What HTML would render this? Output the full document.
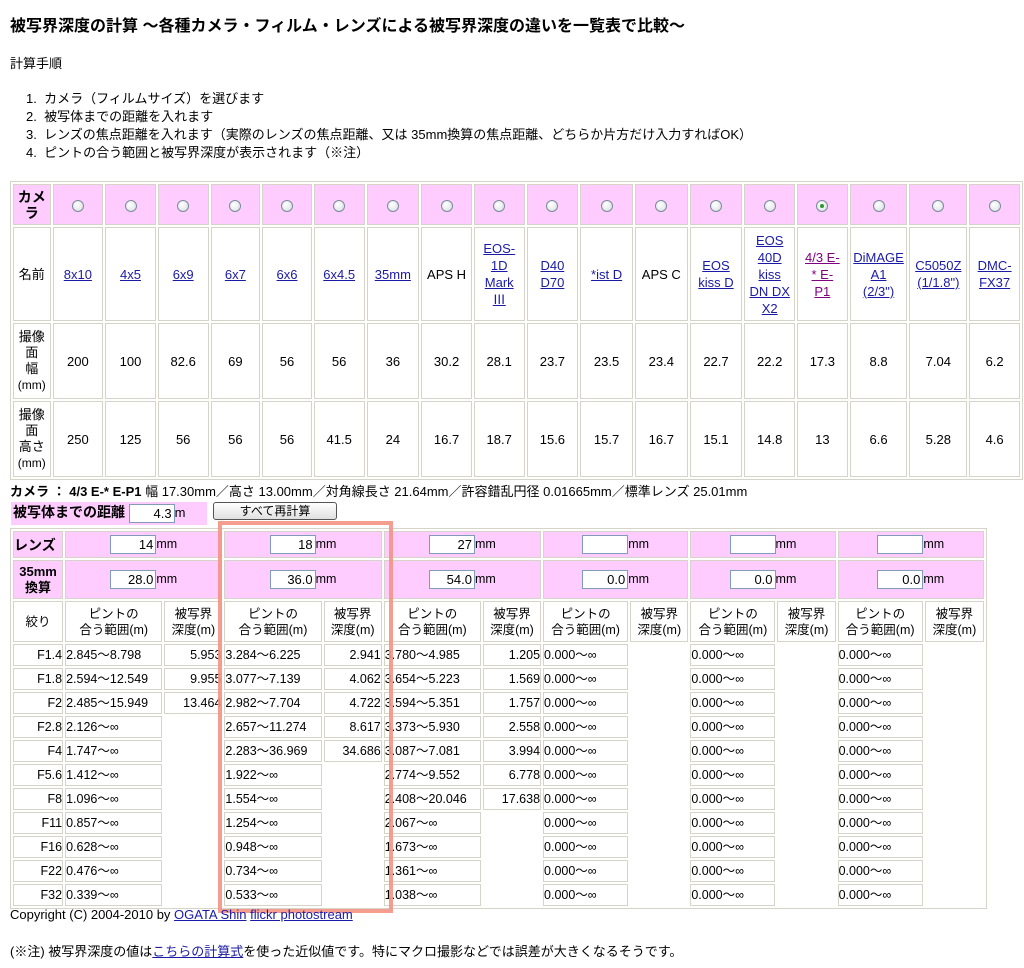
<!DOCTYPE html>
<html><head><meta charset="utf-8">
<style>
body{margin:0;background:#fff;color:#000;font-family:"Liberation Sans","Noto Sans CJK JP",sans-serif;font-size:13px;position:relative;width:1024px;height:968px;overflow:hidden}
.a{position:absolute;white-space:nowrap}
a{color:#1a1aa6;text-decoration:underline}
a.v{color:#800080}
table{border-collapse:separate;border-spacing:2px;table-layout:fixed;position:absolute}
td{padding:0;border:1px solid #d6d3c8;text-align:center;vertical-align:middle;line-height:17px;box-sizing:border-box;overflow:hidden}
.p{background:#ffccff}
.r{display:inline-block;width:12px;height:12px;border-radius:50%;border:1px solid #7a8a99;background:radial-gradient(circle at 40% 35%,#fff,#d8dce0);box-sizing:border-box;vertical-align:middle;position:relative}
.r.on:after{content:"";position:absolute;left:3px;top:3px;width:4px;height:4px;border-radius:50%;background:#2a9a2a}
.in{display:inline-block;width:46px;height:19px;border:1px solid #7f9db9;background:#fff;box-sizing:border-box;text-align:right;padding-right:2px;line-height:17px;vertical-align:middle;font-size:13px}
#t2 td{line-height:16px;white-space:nowrap;font-size:12.5px}
#t2 td.n{text-align:right}
#t2 td.e{border:none}
#t2 td.l{text-align:left}
#t2 td.rt{text-align:right}
</style></head><body>
<div class="a" style="left:10px;top:12px;font-size:16px;font-weight:bold;">被写界深度の計算 ～各種カメラ・フィルム・レンズによる被写界深度の違いを一覧表で比較～</div>
<div class="a" style="left:10px;top:53px;">計算手順</div>
<div class="a" style="left:26px;top:90px;line-height:18px;">1.&nbsp; カメラ（フィルムサイズ）を選びます<br>2.&nbsp; 被写体までの距離を入れます<br>3.&nbsp; レンズの焦点距離を入れます（実際のレンズの焦点距離、又は 35mm換算の焦点距離、どちらか片方だけ入力すればOK）<br>4.&nbsp; ピントの合う範囲と被写界深度が表示されます（※注）</div>

<table style="left:10px;top:181px;width:1013px;border:1px solid #d6d3c8;">
<colgroup><col style="width:37px"><col style="width:50px"><col style="width:50px"><col style="width:50px"><col style="width:49px"><col style="width:49px"><col style="width:50px"><col style="width:52px"><col style="width:50px"><col style="width:50px"><col style="width:51px"><col style="width:52px"><col style="width:52px"><col style="width:52px"><col style="width:50px"><col style="width:50px"><col style="width:57px"><col style="width:57px"><col style="width:50px"></colgroup>
<tr style="height:41px" class="p">
<td class="p" style="font-weight:bold;font-size:14px;line-height:16px">カメ<br>ラ</td>
<td class="p"><span class="r"></span></td><td class="p"><span class="r"></span></td><td class="p"><span class="r"></span></td><td class="p"><span class="r"></span></td><td class="p"><span class="r"></span></td><td class="p"><span class="r"></span></td><td class="p"><span class="r"></span></td><td class="p"><span class="r"></span></td><td class="p"><span class="r"></span></td><td class="p"><span class="r"></span></td><td class="p"><span class="r"></span></td><td class="p"><span class="r"></span></td><td class="p"><span class="r"></span></td><td class="p"><span class="r"></span></td><td class="p"><span class="r on"></span></td><td class="p"><span class="r"></span></td><td class="p"><span class="r"></span></td><td class="p"><span class="r"></span></td>
</tr>
<tr style="height:94px">
<td>名前</td><td><a>8x10</a></td><td><a>4x5</a></td><td><a>6x9</a></td><td><a>6x7</a></td><td><a>6x6</a></td><td><a>6x4.5</a></td><td><a>35mm</a></td><td>APS H</td><td><a>EOS-<br>1D<br>Mark<br>Ⅲ</a></td><td><a>D40<br>D70</a></td><td><a>*ist D</a></td><td>APS C</td><td><a>EOS<br>kiss D</a></td><td><a>EOS<br>40D<br>kiss<br>DN DX<br>X2</a></td><td><a class="v">4/3 E-<br>* E-<br>P1</a></td><td><a>DiMAGE<br>A1<br>(2/3")</a></td><td><a>C5050Z<br>(1/1.8")</a></td><td><a>DMC-<br>FX37</a></td>
</tr>
<tr style="height:76px">
<td style="line-height:16px">撮像<br>面<br>幅<br><span style="font-size:12px">(mm)</span></td><td>200</td><td>100</td><td>82.6</td><td>69</td><td>56</td><td>56</td><td>36</td><td>30.2</td><td>28.1</td><td>23.7</td><td>23.5</td><td>23.4</td><td>22.7</td><td>22.2</td><td>17.3</td><td>8.8</td><td>7.04</td><td>6.2</td>
</tr>
<tr style="height:76px">
<td style="line-height:16px">撮像<br>面<br>高さ<br><span style="font-size:12px">(mm)</span></td><td>250</td><td>125</td><td>56</td><td>56</td><td>56</td><td>41.5</td><td>24</td><td>16.7</td><td>18.7</td><td>15.6</td><td>15.7</td><td>16.7</td><td>15.1</td><td>14.8</td><td>13</td><td>6.6</td><td>5.28</td><td>4.6</td>
</tr>
</table>

<div class="a" style="left:10px;top:481px;"><b>カメラ ： 4/3 E-* E-P1</b> 幅 17.30mm／高さ 13.00mm／対角線長さ 21.64mm／許容錯乱円径 0.01665mm／標準レンズ 25.01mm</div>
<div class="a p" style="left:11px;top:502px;width:196px;height:23px;line-height:21px;"><b style="font-size:14px;padding-left:2px">被写体までの距離</b> <span class="in" style="width:46px">4.3</span>m</div>
<div class="a" style="left:213px;top:502px;width:124px;height:18px;border:1px solid #555;border-radius:3px;background:linear-gradient(#fff,#e0e0e0);text-align:center;line-height:16px;box-sizing:border-box;font-size:12px">すべて再計算</div>

<table id="t2" style="left:10px;top:528px;width:977px;border:1px solid #d6d3c8;">
<colgroup><col style="width:50px"><col style="width:97px"><col style="width:58px"><col style="width:97px"><col style="width:58px"><col style="width:97px"><col style="width:58px"><col style="width:85px"><col style="width:58px"><col style="width:85px"><col style="width:58px"><col style="width:85px"><col style="width:59px"></colgroup>
<tr style="height:27px">
<td class="p" style="font-weight:bold;font-size:14px;text-align:left">レンズ</td>
<td class="p" colspan="2"><span class="in">14</span>mm</td>
<td class="p" colspan="2"><span class="in">18</span>mm</td>
<td class="p" colspan="2"><span class="in">27</span>mm</td>
<td class="p" colspan="2"><span class="in"></span>mm</td>
<td class="p" colspan="2"><span class="in"></span>mm</td>
<td class="p" colspan="2"><span class="in"></span>mm</td>
</tr>
<tr style="height:39px">
<td class="p" style="font-weight:bold;font-size:13px;line-height:16px">35mm<br>換算</td>
<td class="p" colspan="2"><span class="in">28.0</span>mm</td>
<td class="p" colspan="2"><span class="in">36.0</span>mm</td>
<td class="p" colspan="2"><span class="in">54.0</span>mm</td>
<td class="p" colspan="2"><span class="in">0.0</span>mm</td>
<td class="p" colspan="2"><span class="in">0.0</span>mm</td>
<td class="p" colspan="2"><span class="in">0.0</span>mm</td>
</tr>
<tr style="height:41px">
<td>絞り</td>
<td>ピントの<br>合う範囲(m)</td><td>被写界<br>深度(m)</td>
<td>ピントの<br>合う範囲(m)</td><td>被写界<br>深度(m)</td>
<td>ピントの<br>合う範囲(m)</td><td>被写界<br>深度(m)</td>
<td>ピントの<br>合う範囲(m)</td><td>被写界<br>深度(m)</td>
<td>ピントの<br>合う範囲(m)</td><td>被写界<br>深度(m)</td>
<td>ピントの<br>合う範囲(m)</td><td>被写界<br>深度(m)</td>
</tr>
<tr style="height:22px"><td class="n">F1.4</td><td class="l">2.845～8.798</td><td class="rt">5.953</td><td class="l">3.284～6.225</td><td class="rt">2.941</td><td class="l">3.780～4.985</td><td class="rt">1.205</td><td class="l">0.000～∞</td><td class="e"></td><td class="l">0.000～∞</td><td class="e"></td><td class="l">0.000～∞</td><td class="e"></td></tr>
<tr style="height:22px"><td class="n">F1.8</td><td class="l">2.594～12.549</td><td class="rt">9.955</td><td class="l">3.077～7.139</td><td class="rt">4.062</td><td class="l">3.654～5.223</td><td class="rt">1.569</td><td class="l">0.000～∞</td><td class="e"></td><td class="l">0.000～∞</td><td class="e"></td><td class="l">0.000～∞</td><td class="e"></td></tr>
<tr style="height:22px"><td class="n">F2</td><td class="l">2.485～15.949</td><td class="rt">13.464</td><td class="l">2.982～7.704</td><td class="rt">4.722</td><td class="l">3.594～5.351</td><td class="rt">1.757</td><td class="l">0.000～∞</td><td class="e"></td><td class="l">0.000～∞</td><td class="e"></td><td class="l">0.000～∞</td><td class="e"></td></tr>
<tr style="height:22px"><td class="n">F2.8</td><td class="l">2.126～∞</td><td class="e"></td><td class="l">2.657～11.274</td><td class="rt">8.617</td><td class="l">3.373～5.930</td><td class="rt">2.558</td><td class="l">0.000～∞</td><td class="e"></td><td class="l">0.000～∞</td><td class="e"></td><td class="l">0.000～∞</td><td class="e"></td></tr>
<tr style="height:22px"><td class="n">F4</td><td class="l">1.747～∞</td><td class="e"></td><td class="l">2.283～36.969</td><td class="rt">34.686</td><td class="l">3.087～7.081</td><td class="rt">3.994</td><td class="l">0.000～∞</td><td class="e"></td><td class="l">0.000～∞</td><td class="e"></td><td class="l">0.000～∞</td><td class="e"></td></tr>
<tr style="height:22px"><td class="n">F5.6</td><td class="l">1.412～∞</td><td class="e"></td><td class="l">1.922～∞</td><td class="e"></td><td class="l">2.774～9.552</td><td class="rt">6.778</td><td class="l">0.000～∞</td><td class="e"></td><td class="l">0.000～∞</td><td class="e"></td><td class="l">0.000～∞</td><td class="e"></td></tr>
<tr style="height:22px"><td class="n">F8</td><td class="l">1.096～∞</td><td class="e"></td><td class="l">1.554～∞</td><td class="e"></td><td class="l">2.408～20.046</td><td class="rt">17.638</td><td class="l">0.000～∞</td><td class="e"></td><td class="l">0.000～∞</td><td class="e"></td><td class="l">0.000～∞</td><td class="e"></td></tr>
<tr style="height:22px"><td class="n">F11</td><td class="l">0.857～∞</td><td class="e"></td><td class="l">1.254～∞</td><td class="e"></td><td class="l">2.067～∞</td><td class="e"></td><td class="l">0.000～∞</td><td class="e"></td><td class="l">0.000～∞</td><td class="e"></td><td class="l">0.000～∞</td><td class="e"></td></tr>
<tr style="height:22px"><td class="n">F16</td><td class="l">0.628～∞</td><td class="e"></td><td class="l">0.948～∞</td><td class="e"></td><td class="l">1.673～∞</td><td class="e"></td><td class="l">0.000～∞</td><td class="e"></td><td class="l">0.000～∞</td><td class="e"></td><td class="l">0.000～∞</td><td class="e"></td></tr>
<tr style="height:22px"><td class="n">F22</td><td class="l">0.476～∞</td><td class="e"></td><td class="l">0.734～∞</td><td class="e"></td><td class="l">1.361～∞</td><td class="e"></td><td class="l">0.000～∞</td><td class="e"></td><td class="l">0.000～∞</td><td class="e"></td><td class="l">0.000～∞</td><td class="e"></td></tr>
<tr style="height:22px"><td class="n">F32</td><td class="l">0.339～∞</td><td class="e"></td><td class="l">0.533～∞</td><td class="e"></td><td class="l">1.038～∞</td><td class="e"></td><td class="l">0.000～∞</td><td class="e"></td><td class="l">0.000～∞</td><td class="e"></td><td class="l">0.000～∞</td><td class="e"></td></tr>
</table>

<div class="a" style="left:218px;top:521px;width:175px;height:392px;border:4px solid #f49484;box-sizing:border-box;opacity:.9"></div>

<div class="a" style="left:10px;top:907px;">Copyright (C) 2004-2010 by <a>OGATA Shin</a> <a>flickr photostream</a></div>
<div class="a" style="left:10px;top:941px;">(※注) 被写界深度の値は<a>こちらの計算式</a>を使った近似値です。特にマクロ撮影などでは誤差が大きくなるそうです。</div>
</body></html>
